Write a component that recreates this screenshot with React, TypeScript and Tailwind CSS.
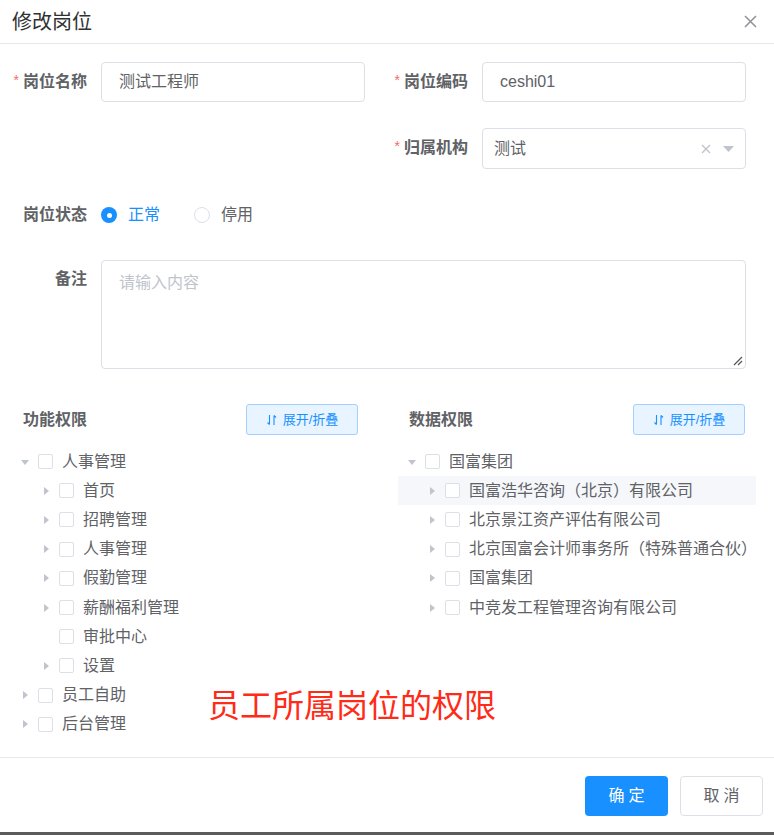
import React from "react";

const FONT = '"Liberation Sans", "Noto Sans CJK SC", sans-serif';

function Caret({ open, show = true }: { open?: boolean; show?: boolean }) {
  return (
    <span className="w-[12px] h-[12px] flex items-center justify-center shrink-0">
      {show && (
        <svg width="8" height="8" viewBox="0 0 8 8">
          {open ? (
            <polygon points="0,2 8,2 4,7" fill="#c0c4cc" />
          ) : (
            <polygon points="2,0 7,4 2,8" fill="#c0c4cc" />
          )}
        </svg>
      )}
    </span>
  );
}

function Check() {
  return <span className="block w-[15px] h-[15px] border border-[#dcdfe6] rounded-[2px] bg-white shrink-0 ml-[7px]" />;
}

function TreeRow({
  level,
  label,
  open,
  leaf,
  hl,
  base,
}: {
  level: number;
  label: string;
  open?: boolean;
  leaf?: boolean;
  hl?: boolean;
  base: "l" | "r";
}) {
  const pad =
    base === "l"
      ? level === 1
        ? "pl-[19px]"
        : "pl-[40px]"
      : level === 1
      ? "pl-[8px]"
      : "pl-[28px]";
  return (
    <div className={`h-[29.2px] flex items-center ${hl ? "bg-[#f5f7fa]" : ""}`}>
      <div className={`flex items-center ${pad}`}>
        <Caret open={open} show={!leaf} />
        <Check />
        <span className="ml-[9px] text-[16px] leading-[20px] text-[#606266] whitespace-nowrap">{label}</span>
      </div>
    </div>
  );
}

function SortIcon() {
  return (
    <svg width="12" height="12" viewBox="0 0 12 12" fill="none" stroke="#1890ff" strokeWidth="1.1">
      <path d="M3.5 1 V10.5 M1.5 8.5 L3.5 10.5" />
      <path d="M8 11 V1.5 M8 1.5 L10 3.5" />
    </svg>
  );
}

function ExpandBtn() {
  return (
    <div className="w-[112px] h-[31px] rounded-[3px] border border-[#a3d0fd] bg-[#e8f4ff] flex items-center justify-center gap-[5px] text-[#1890ff] text-[13px] leading-none">
      <SortIcon />
      <span>展开/折叠</span>
    </div>
  );
}

function Label({ text, required, w }: { text: string; required?: boolean; w: string }) {
  return (
    <div className={`${w} shrink-0 flex justify-end items-center pr-[14px] h-[40px]`}>
      {required && <span className="text-[#f56c6c] text-[14px] mr-[4px] leading-none -mt-[4px]">*</span>}
      <span className="text-[16px] font-bold text-[#606266] leading-none">{text}</span>
    </div>
  );
}

export default function App() {
  return (
    <div className="w-[774px] h-[835px] bg-white relative flex flex-col" style={{ fontFamily: FONT }}>
      {/* header */}
      <div className="h-[44px] border-b border-[#e8e8e8] flex items-center justify-between pl-[12px] pr-[17px] shrink-0">
        <span className="text-[20px] text-[#303133] leading-none">修改岗位</span>
        <svg width="13" height="13" viewBox="0 0 13 13" stroke="#909399" strokeWidth="1.6">
          <path d="M1 1 L12 12 M12 1 L1 12" />
        </svg>
      </div>

      {/* body */}
      <div className="flex-1 flex flex-col">
        <div className="pt-[18px] flex flex-col gap-[26px]">
          {/* row 1 */}
          <div className="flex">
            <div className="flex w-[381px]">
              <Label text="岗位名称" required w="w-[101px]" />
              <div className="w-[264px] h-[40px] border border-[#dcdfe6] rounded-[4px] flex items-center pl-[17px] text-[16px] text-[#606266]">
                测试工程师
              </div>
            </div>
            <div className="flex">
              <Label text="岗位编码" required w="w-[101px]" />
              <div className="w-[264px] h-[40px] border border-[#dcdfe6] rounded-[4px] flex items-center pl-[17px] text-[16px] text-[#606266]">
                ceshi01
              </div>
            </div>
          </div>
          {/* row 2 */}
          <div className="flex">
            <div className="w-[381px]" />
            <div className="flex">
              <Label text="归属机构" required w="w-[101px]" />
              <div className="w-[264px] h-[41px] border border-[#dcdfe6] rounded-[4px] flex items-center pl-[11px] pr-[11px] text-[16px] text-[#606266]">
                <span className="flex-1">测试</span>
                <svg width="10" height="10" viewBox="0 0 10 10" stroke="#c0c4cc" strokeWidth="1.4">
                  <path d="M1 1 L9 9 M9 1 L1 9" />
                </svg>
                <svg className="ml-[12px]" width="11" height="6" viewBox="0 0 11 6">
                  <polygon points="0,0 11,0 5.5,6" fill="#c0c4cc" />
                </svg>
              </div>
            </div>
          </div>
          {/* row 3 */}
          <div className="flex items-center">
            <Label text="岗位状态" w="w-[101px]" />
            <div className="flex items-center h-[40px]">
              <span className="w-[16px] h-[16px] rounded-full bg-[#1890ff] flex items-center justify-center">
                <span className="w-[5px] h-[5px] rounded-full bg-white" />
              </span>
              <span className="ml-[11px] text-[16px] text-[#1890ff] leading-none">正常</span>
              <span className="ml-[34px] w-[16px] h-[16px] rounded-full border border-[#dcdfe6] bg-white" />
              <span className="ml-[11px] text-[16px] text-[#606266] leading-none">停用</span>
            </div>
          </div>
          {/* row 4 */}
          <div className="flex -mt-[1px]">
            <div className="w-[101px] shrink-0 flex justify-end pr-[14px] pt-[11px]">
              <span className="text-[16px] font-bold text-[#606266] leading-none">备注</span>
            </div>
            <div className="w-[645px] h-[109px] border border-[#dcdfe6] rounded-[4px] relative pl-[17px] pt-[10px]">
              <span className="text-[16px] text-[#c0c4cc] leading-none">请输入内容</span>
              <svg className="absolute right-[2px] bottom-[2px]" width="10" height="10" viewBox="0 0 10 10" stroke="#555" strokeWidth="1.2">
                <path d="M1 9 L9 1 M5 9 L9 5" />
              </svg>
            </div>
          </div>
        </div>

        {/* permissions */}
        <div className="flex mt-[35px]">
          {/* left */}
          <div className="w-[398px] shrink-0">
            <div className="flex items-center justify-between pl-[23px] pr-[40px]">
              <span className="text-[16px] font-bold text-[#606266]">功能权限</span>
              <ExpandBtn />
            </div>
            <div className="mt-[12px]">
              <TreeRow base="l" level={1} label="人事管理" open />
              <TreeRow base="l" level={2} label="首页" />
              <TreeRow base="l" level={2} label="招聘管理" />
              <TreeRow base="l" level={2} label="人事管理" />
              <TreeRow base="l" level={2} label="假勤管理" />
              <TreeRow base="l" level={2} label="薪酬福利管理" />
              <TreeRow base="l" level={2} label="审批中心" leaf />
              <TreeRow base="l" level={2} label="设置" />
              <TreeRow base="l" level={1} label="员工自助" />
              <TreeRow base="l" level={1} label="后台管理" />
            </div>
          </div>
          {/* right */}
          <div className="w-[358px] shrink-0">
            <div className="flex items-center justify-between pl-[11px] pr-[11px]">
              <span className="text-[16px] font-bold text-[#606266]">数据权限</span>
              <ExpandBtn />
            </div>
            <div className="mt-[12px]">
              <TreeRow base="r" level={1} label="国富集团" open />
              <TreeRow base="r" level={2} label="国富浩华咨询（北京）有限公司" hl />
              <TreeRow base="r" level={2} label="北京景江资产评估有限公司" />
              <TreeRow base="r" level={2} label="北京国富会计师事务所（特殊普通合伙）" />
              <TreeRow base="r" level={2} label="国富集团" />
              <TreeRow base="r" level={2} label="中竞发工程管理咨询有限公司" />
            </div>
          </div>
        </div>
      </div>

      {/* footer */}
      <div className="h-[76px] border-t border-[#e8e8e8] flex items-center justify-end pr-[11px] gap-[12px] shrink-0 -mb-[1px]">
        <div className="w-[83px] h-[40px] rounded-[4px] bg-[#1890ff] text-white text-[16px] flex items-center justify-center tracking-[4px] pl-[4px]">
          确定
        </div>
        <div className="w-[83px] h-[40px] rounded-[4px] border border-[#dcdfe6] bg-white text-[#606266] text-[16px] flex items-center justify-center tracking-[4px] pl-[4px]">
          取消
        </div>
      </div>
      <div className="h-[3px] bg-[#5b5b5b] shrink-0" />

      {/* annotation overlay */}
      <div className="absolute left-[208px] top-[686px] text-[32px] leading-[40px] text-[#ff2a17] whitespace-nowrap">
        员工所属岗位的权限
      </div>
    </div>
  );
}
